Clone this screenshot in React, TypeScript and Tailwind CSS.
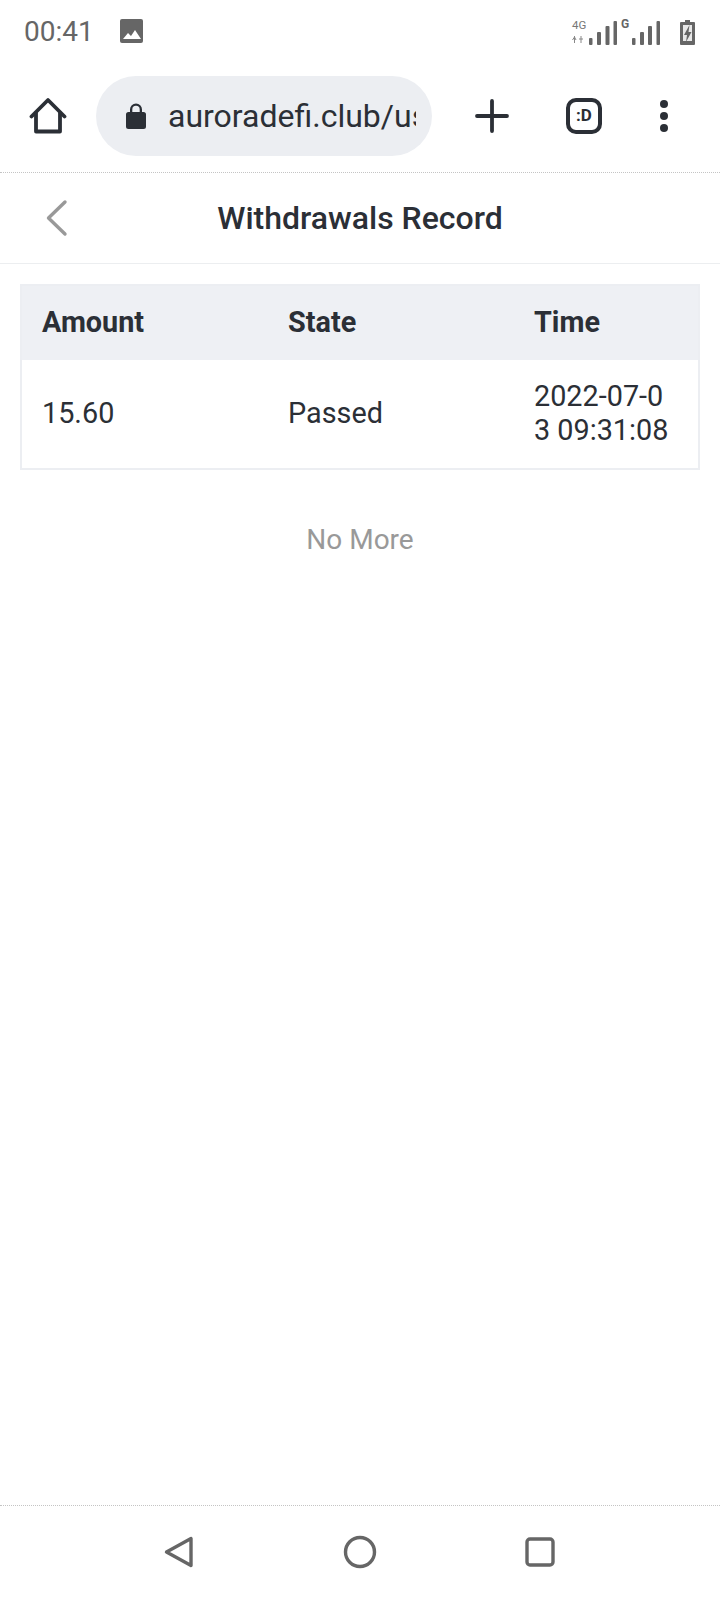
import React from "react";

const StatusIcons = () => {
  return (
    <svg width="130" height="30" viewBox="570 15 130 30" fill="#666">
      <text x="572" y="26" fontSize="11.500" fill="#777" fontFamily="Roboto, sans-serif">4G</text>
      <path d="M574.500 33v7M572.500 37l2-3 1.500 3M581 33v7M579 36h4" stroke="#888" strokeWidth="1" fill="none" />
      <rect x="589" y="35" width="3.500" height="7" rx="1" />
      <rect x="597" y="29" width="4" height="13" rx="1" />
      <rect x="605.500" y="23" width="4" height="19" rx="1" />
      <rect x="613.500" y="18" width="3.500" height="24" rx="1" />
      <text x="621" y="25" fontSize="12" fontWeight="700" fontFamily="Roboto, sans-serif">G</text>
      <rect x="632" y="35" width="3.500" height="7" rx="1" />
      <rect x="640" y="29" width="4" height="13" rx="1" />
      <rect x="648" y="23" width="4" height="19" rx="1" />
      <rect x="656.500" y="18" width="3.500" height="24" rx="1" />
      <path d="M685 17h5v2h4a1 1 0 0 1 1 1v21a1 1 0 0 1-1 1h-13a1 1 0 0 1-1-1V20a1 1 0 0 1 1-1h4z" />
      <path d="M683 22h9v16h-9z" fill="#e8e8e8" />
      <path d="M689.500 22l-5.500 10h3l-1 7 5.500-10h-3z" fill="#666" />
    </svg>
  );
};

const Toolbar = () => {
  return (
    <div className="flex h-[106px] items-center border-b border-dotted border-[#c4c4c4] box-content pb-0">
      <div className="flex h-[100px] items-center -mt-[6px]">
        <svg className="ml-[29px] shrink-0" width="38" height="38" viewBox="0 0 38 38" fill="none" stroke="#2b2f36" strokeWidth="3.800" strokeLinejoin="round" strokeLinecap="round">
          <path d="M2.500 19.500 19 3l16.500 16.500" />
          <path d="M7 16v18.500h24V16" />
        </svg>
        <div className="ml-[29px] flex h-20 w-[336px] shrink-0 items-center rounded-full bg-[#eceef2] pl-[30px] pr-4">
          <svg className="shrink-0" width="20" height="26" viewBox="0 0 20 26" fill="#2b2f36">
            <path fillRule="evenodd" d="M2.500 9H4V6.500a6 6 0 0 1 12 0V9h1.500A2.500 2.500 0 0 1 20 11.500v12a2.500 2.500 0 0 1-2.500 2.500h-15A2.500 2.500 0 0 1 0 23.500v-12A2.500 2.500 0 0 1 2.500 9zM6.300 9h7.400V6.500a3.700 3.700 0 0 0-7.400 0z" />
          </svg>
          <div className="ml-[22px] overflow-hidden whitespace-nowrap text-[32px] leading-[40px] text-[#2b2f36]">
            auroradefi.club/us
          </div>
        </div>
        <svg className="ml-[43px] shrink-0" width="34" height="34" viewBox="0 0 34 34" stroke="#2b2f36" strokeWidth="3.800" strokeLinecap="round">
          <path d="M17 2v30M2 17h30" />
        </svg>
        <div className="ml-[57px] flex h-9 w-9 shrink-0 items-center justify-center rounded-[10px] border-4 border-[#2b2f36] text-[17px] font-bold text-[#2b2f36]">
          :D
        </div>
        <div className="ml-[58px] flex shrink-0 flex-col gap-1">
          <span className="h-2 w-2 rounded-full bg-[#2b2f36]" />
          <span className="h-2 w-2 rounded-full bg-[#2b2f36]" />
          <span className="h-2 w-2 rounded-full bg-[#2b2f36]" />
        </div>
      </div>
    </div>
  );
};

const App = () => {
  return (
    <div className="flex h-[1600px] w-[720px] flex-col overflow-hidden bg-white font-['Roboto',sans-serif]">
      <div className="flex h-[66px] items-center justify-between pl-6 pr-5">
        <div className="flex items-center -mt-[2px]">
          <span className="text-[28px] leading-none text-[#666]">00:41</span>
          <svg className="ml-[26px] -mt-[2px]" width="23" height="24" viewBox="0 0 23 24">
            <rect width="23" height="24" rx="2" fill="#666" />
            <path d="M3 20l5-6 3 3 4-6 6 9z" fill="#fff" />
          </svg>
        </div>
        <StatusIcons />
      </div>
      <Toolbar />

      <div className="relative flex h-[91px] items-center justify-center border-b border-[#eceef0]">
        <svg className="absolute left-[45px] top-[26px]" width="24" height="38" viewBox="0 0 24 38" fill="none" stroke="#999" strokeWidth="3.400" strokeLinecap="round" strokeLinejoin="round">
          <path d="M20 3 3.500 19 20 35" />
        </svg>
        <h1 className="text-[32px] font-medium text-[#2b2f36]">Withdrawals Record</h1>
      </div>

      <div className="mx-5 mt-5 border-2 border-[#eceef2] text-[28.800px] leading-[34px] text-[#2b2f36]">
        <div className="grid h-[74px] grid-cols-[246px_246px_184px] items-center bg-[#eef0f4] pb-[2px] font-bold">
          <div className="pl-5">Amount</div>
          <div className="pl-5">State</div>
          <div className="pl-5">Time</div>
        </div>
        <div className="grid h-[108px] grid-cols-[246px_246px_184px] items-center pb-[2px]">
          <div className="pl-5">15.60</div>
          <div className="pl-5">Passed</div>
          <div className="px-5 break-all">2022-07-03 09:31:08</div>
        </div>
      </div>

      <div className="mt-[53px] text-center text-[28px] leading-[34px] text-[#999]">No More</div>

      <div className="mt-auto flex h-[95px] items-center border-t border-dotted border-[#c4c4c4] pb-[2px]">
        <svg className="ml-[164px]" width="30" height="32" viewBox="0 0 30 32" fill="none" stroke="#666" strokeWidth="3.400" strokeLinejoin="round">
          <path d="M27 2.500v27L2.500 16z" />
        </svg>
        <svg className="ml-[149px]" width="34" height="34" viewBox="0 0 34 34" fill="none" stroke="#666" strokeWidth="3.400">
          <circle cx="17" cy="17" r="14.500" />
        </svg>
        <svg className="ml-[148px]" width="30" height="30" viewBox="0 0 30 30" fill="none" stroke="#666" strokeWidth="3.400">
          <rect x="2" y="2" width="26" height="26" rx="3" />
        </svg>
      </div>
    </div>
  );
};

export default App;
